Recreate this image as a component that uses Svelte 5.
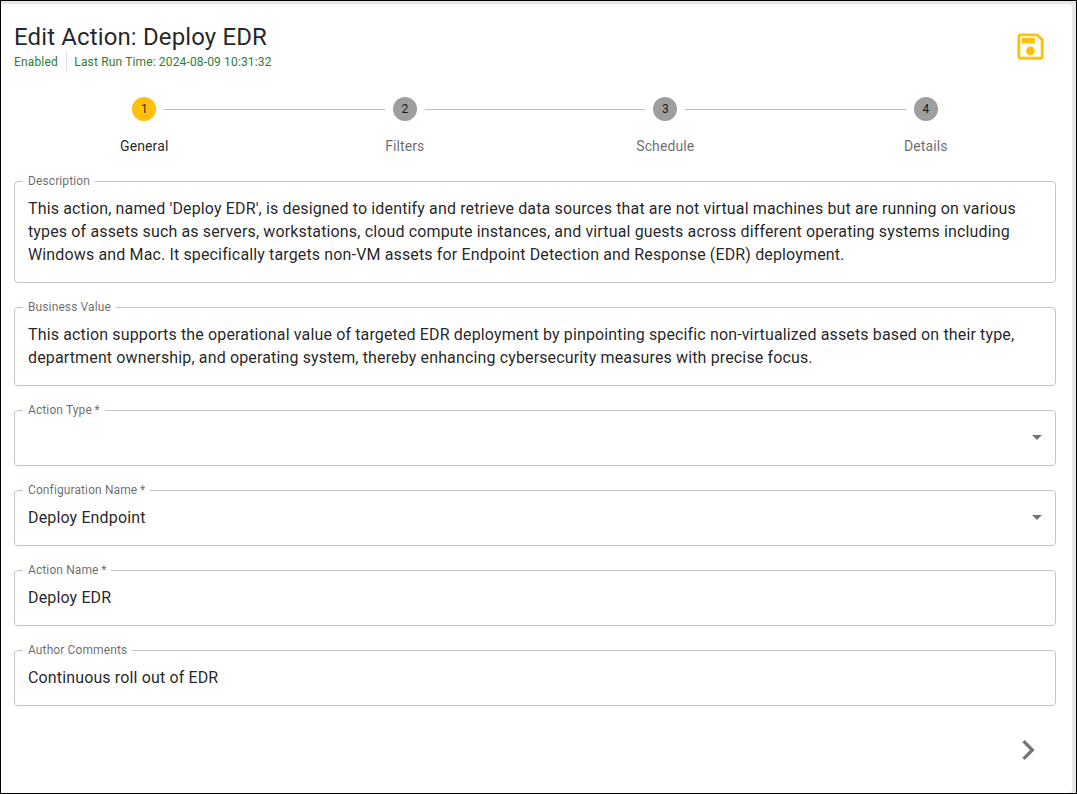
<script>
  const steps = [
    { n: 1, label: 'General', active: true },
    { n: 2, label: 'Filters' },
    { n: 3, label: 'Schedule' },
    { n: 4, label: 'Details' }
  ];

  const fields = [
    {
      label: 'Description',
      lines: [
        "This action, named 'Deploy EDR', is designed to identify and retrieve data sources that are not virtual machines but are running on various",
        'types of assets such as servers, workstations, cloud compute instances, and virtual guests across different operating systems including',
        'Windows and Mac. It specifically targets non-VM assets for Endpoint Detection and Response (EDR) deployment.'
      ]
    },
    {
      label: 'Business Value',
      lines: [
        'This action supports the operational value of targeted EDR deployment by pinpointing specific non-virtualized assets based on their type,',
        'department ownership, and operating system, thereby enhancing cybersecurity measures with precise focus.'
      ]
    },
    { label: 'Action Type\u2009*', lines: [''], select: true },
    { label: 'Configuration Name\u2009*', lines: ['Deploy Endpoint'], select: true },
    { label: 'Action Name\u2009*', lines: ['Deploy EDR'] },
    { label: 'Author Comments', lines: ['Continuous roll out of EDR'] }
  ];
</script>

<div class="frame">
  <div class="dialog">
    <header class="head">
      <div>
        <h1>Edit Action: Deploy EDR</h1>
        <div class="meta">
          <span class="status">Enabled</span>
          <span class="run">Last Run Time: 2024-08-09 10:31:32</span>
        </div>
      </div>
      <svg class="save" viewBox="0 0 24 24" width="35" height="35" aria-label="Save">
        <path d="M17 3H5c-1.11 0-2 .9-2 2v14c0 1.1.89 2 2 2h14c1.1 0 2-.9 2-2V7l-4-4zm2 16H5V5h11.17L19 7.83V19zm-7-7c-1.66 0-3 1.34-3 3s1.34 3 3 3 3-1.34 3-3-1.34-3-3-3zM6 6h9v4H6z" />
      </svg>
    </header>

    <div class="stepper">
      {#each steps as step, i}
        <div class="step">
          {#if i > 0}<span class="line"></span>{/if}
          <span class="dot" class:active={step.active}>{step.n}</span>
          <span class="label" class:active={step.active}>{step.label}</span>
        </div>
      {/each}
    </div>

    <div class="form">
      {#each fields as field}
        <fieldset class="field">
          <legend>{field.label}</legend>
          <div class="value">
            {#each field.lines as line}
              <div class="text">{line}</div>
            {/each}
          </div>
          {#if field.select}<span class="caret"></span>{/if}
        </fieldset>
      {/each}
    </div>

    <div class="foot">
      <svg viewBox="0 0 24 24" width="40" height="40" aria-label="Next">
        <path d="M10 6 8.59 7.41 13.17 12l-4.58 4.59L10 18l6-6z" />
      </svg>
    </div>
  </div>
</div>

<style>
  :global(body) {
    margin: 0;
    font-family: Roboto, sans-serif;
  }

  .frame {
    box-sizing: border-box;
    width: 1077px;
    height: 794px;
    border: 1px solid #000;
    background: #e6e6e6;
    padding: 3px 4px 0 0;
  }

  .dialog {
    box-sizing: border-box;
    height: 100%;
    background: #fff;
    border-radius: 0 4px 4px 0;
    padding: 17px 16px 0 13px;
    overflow: hidden;
  }

  .head {
    display: flex;
    justify-content: space-between;
    align-items: flex-start;
  }

  h1 {
    margin: 0;
    font-size: 24px;
    font-weight: 400;
    line-height: 32px;
    letter-spacing: 0.13px;
    color: rgba(0, 0, 0, 0.87);
  }

  .meta {
    display: flex;
    font-size: 12px;
    line-height: 20px;
    letter-spacing: 0.15px;
    color: #2e7d32;
    margin-top: -1px;
  }

  .status {
    padding-right: 8px;
    border-right: 1px solid #e0e0e0;
    margin-right: 7.5px;
  }

  .save {
    fill: #ffc107;
    margin-top: 8px;
    margin-right: 8px;
  }

  .stepper {
    display: grid;
    grid-template-columns: repeat(4, 1fr);
    margin-top: 25px;
  }

  .step {
    position: relative;
    display: flex;
    flex-direction: column;
    align-items: center;
  }

  .line {
    position: absolute;
    top: 12px;
    left: calc(-50% + 20px);
    right: calc(50% + 20px);
    border-top: 1px solid #bdbdbd;
  }

  .dot {
    width: 24px;
    height: 24px;
    border-radius: 50%;
    background: #9e9e9e;
    color: rgba(0, 0, 0, 0.87);
    font-size: 12px;
    line-height: 24px;
    text-align: center;
  }

  .dot.active {
    background: #ffc107;
  }

  .label {
    margin-top: 15px;
    font-size: 14px;
    line-height: 20px;
    letter-spacing: 0.1px;
    color: rgba(0, 0, 0, 0.6);
  }

  .label.active {
    color: rgba(0, 0, 0, 0.87);
  }

  .form {
    display: flex;
    flex-direction: column;
    gap: 17px;
    margin-top: 18px;
  }

  .field {
    position: relative;
    margin: 0;
    padding: 0 13px;
    border: 1px solid #c4c4c4;
    border-radius: 4px;
  }

  legend {
    padding: 0 5px;
    margin-left: -5px;
    font-size: 12px;
    line-height: 14px;
    letter-spacing: 0.11px;
    color: rgba(0, 0, 0, 0.6);
  }

  .value {
    padding: 9px 0 16px;
  }

  .text {
    font-size: 16px;
    line-height: 23px;
    min-height: 23px;
    letter-spacing: 0.14px;
    color: rgba(0, 0, 0, 0.87);
    white-space: nowrap;
  }

  .caret {
    position: absolute;
    right: 13px;
    top: calc(50% - 6px);
    border: 5px solid transparent;
    border-top-color: #757575;
    border-bottom-width: 0;
  }

  .foot {
    display: flex;
    justify-content: flex-end;
    margin-top: 24px;
    margin-right: 8px;
  }

  .foot svg {
    fill: #757575;
  }
</style>
